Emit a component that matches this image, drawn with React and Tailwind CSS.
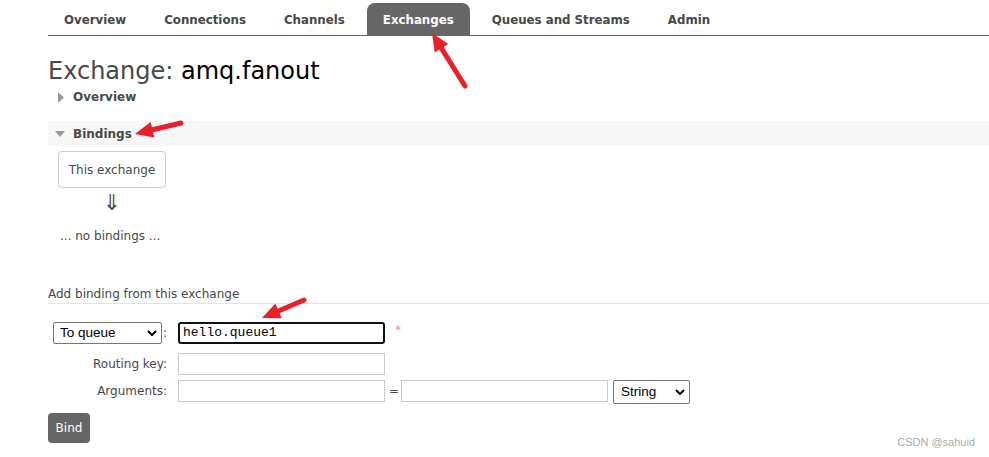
import React from 'react';

const tabs = ['Overview', 'Connections', 'Channels', 'Exchanges', 'Queues and Streams', 'Admin'];

// red annotation arrow: tail -> tip
const Arrow = ({ x1, y1, x2, y2 }) => {
    const dx = x2 - x1;
    const dy = y2 - y1;
    const len = Math.hypot(dx, dy);
    const ux = dx / len;
    const uy = dy / len;
    const head = 18;
    const half = 8;
    const bx = x2 - ux * head;
    const by = y2 - uy * head;
    const pts = `${x2},${y2} ${bx - uy * half},${by + ux * half} ${bx + uy * half},${by - ux * half}`;
    return (
        <g>
            <line x1={x1} y1={y1} x2={bx + ux * 2} y2={by + uy * 2} stroke="#e8202a" strokeWidth="5" strokeLinecap="round" />
            <polygon points={pts} fill="#e8202a" />
        </g>
    );
};

const Chevron = () => (
    <svg width="10" height="7" viewBox="0 0 10 7" className="absolute right-[5px] top-1/2 -translate-y-1/2 pointer-events-none">
        <path d="M1 1.5L5 5.5L9 1.5" stroke="#000" strokeWidth="2" fill="none" />
    </svg>
);

export default function App() {
    return (
        <div className="relative w-[989px] h-[457px] overflow-hidden bg-white text-[#484848] text-[12px]" style={{ fontFamily: '"DejaVu Sans", Verdana, sans-serif' }}>
            <div className="pl-[48px]">
                {/* tabs */}
                <ul className="flex gap-[6px] pt-[3px] border-b border-[#666]">
                    {tabs.map((t) => (
                        <li
                            key={t}
                            className={
                                t === 'Exchanges'
                                    ? 'h-[32px] px-[16px] pt-[4px] flex items-center font-bold text-[11.8px] bg-[#666] text-white rounded-t-[8px]'
                                    : 'h-[32px] px-[16px] pt-[4px] flex items-center font-bold text-[11.8px]'
                            }
                        >
                            {t}
                        </li>
                    ))}
                </ul>

                <h1 className="mt-[21px] text-[24px] leading-[28px] text-[#484848]">
                    Exchange: <span className="text-black">amq.fanout</span>
                </h1>

                <div className="h-[24px] flex items-center pl-[10px] font-bold">
                    <svg width="6" height="11" viewBox="0 0 6 11" className="mr-[9px]"><path d="M0 0L6 5.5L0 11Z" fill="#999" /></svg>
                    Overview
                </div>

                <div className="mt-[12px] h-[25px] flex items-center pl-[7px] bg-[#f7f7f7] font-bold">
                    <svg width="10" height="6" viewBox="0 0 10 6" className="mr-[8px]"><path d="M0 0H10L5 6Z" fill="#999" /></svg>
                    Bindings
                </div>

                <div className="pl-[10px] pt-[5px]">
                    <div className="w-[108px] h-[37px] border border-[#ccc] rounded-[4px] flex items-center justify-center">This exchange</div>
                    <div className="w-[108px] text-center text-[22px] leading-[28px] mt-[1px]">⇓</div>
                    <div className="mt-[10px] pl-[2px]">... no bindings ...</div>
                </div>

                <div className="mt-[40px] border-b border-[#e2e2e2]">Add binding from this exchange</div>

                {/* form */}
                <div className="mt-[18px] flex flex-col gap-[9px]">
                    <div className="flex items-center h-[22px]">
                        <div className="w-[124px] flex items-center justify-end pr-[5px]">
                            <div className="relative">
                                <select className="appearance-none w-[109px] h-[22px] border border-[#767676] rounded-[2px] pl-[6px] text-[13.5px] text-black" style={{ fontFamily: '"Liberation Sans", Arial, sans-serif' }}>
                                    <option>To queue</option>
                                </select>
                                <Chevron />
                            </div>
                            <span className="ml-[1px]">:</span>
                        </div>
                        <div className="ml-[6px] w-[207px] h-[22px] border-2 border-[#111] rounded-[3px] flex items-center pl-[3px] text-[13px] text-black" style={{ fontFamily: '"Liberation Mono", "Courier New", monospace' }}>
                            hello.queue1
                        </div>
                        <span className="ml-[10px] text-[#f88] text-[12px] -mt-[6px]">*</span>
                    </div>

                    <div className="flex items-center h-[22px]">
                        <div className="w-[124px] text-right pr-[5px]">Routing key:</div>
                        <input className="ml-[6px] w-[207px] h-[22px] border border-[#ccc]" />
                    </div>

                    <div className="flex items-center h-[22px] -mt-[4px]">
                        <div className="w-[124px] text-right pr-[5px]">Arguments:</div>
                        <input className="ml-[6px] w-[207px] h-[22px] border border-[#ccc]" />
                        <span className="ml-[4px] w-[12px]">=</span>
                        <input className="w-[207px] h-[22px] border border-[#ccc]" />
                        <div className="relative ml-[5px] mt-[2px]">
                            <select className="appearance-none w-[77px] h-[24px] border border-[#767676] rounded-[2px] pl-[7px] text-[13.5px] text-black" style={{ fontFamily: '"Liberation Sans", Arial, sans-serif' }}>
                                <option>String</option>
                            </select>
                            <Chevron />
                        </div>
                    </div>
                </div>

                <button className="mt-[11px] w-[42px] h-[30px] bg-[#666] text-white rounded-[4px] text-[12px]">Bind</button>
            </div>

            <div className="absolute right-[14px] bottom-[7px] text-[11px] text-[#aaa]" style={{ fontFamily: '"Liberation Sans", Arial, sans-serif' }}>CSDN @sahuid</div>

            <svg className="absolute inset-0 pointer-events-none" width="989" height="457">
                <Arrow x1={465} y1={86} x2={432} y2={33} />
                <Arrow x1={181} y1={123} x2={135} y2={134} />
                <Arrow x1={304} y1={300} x2={262} y2={318} />
            </svg>
        </div>
    );
}
